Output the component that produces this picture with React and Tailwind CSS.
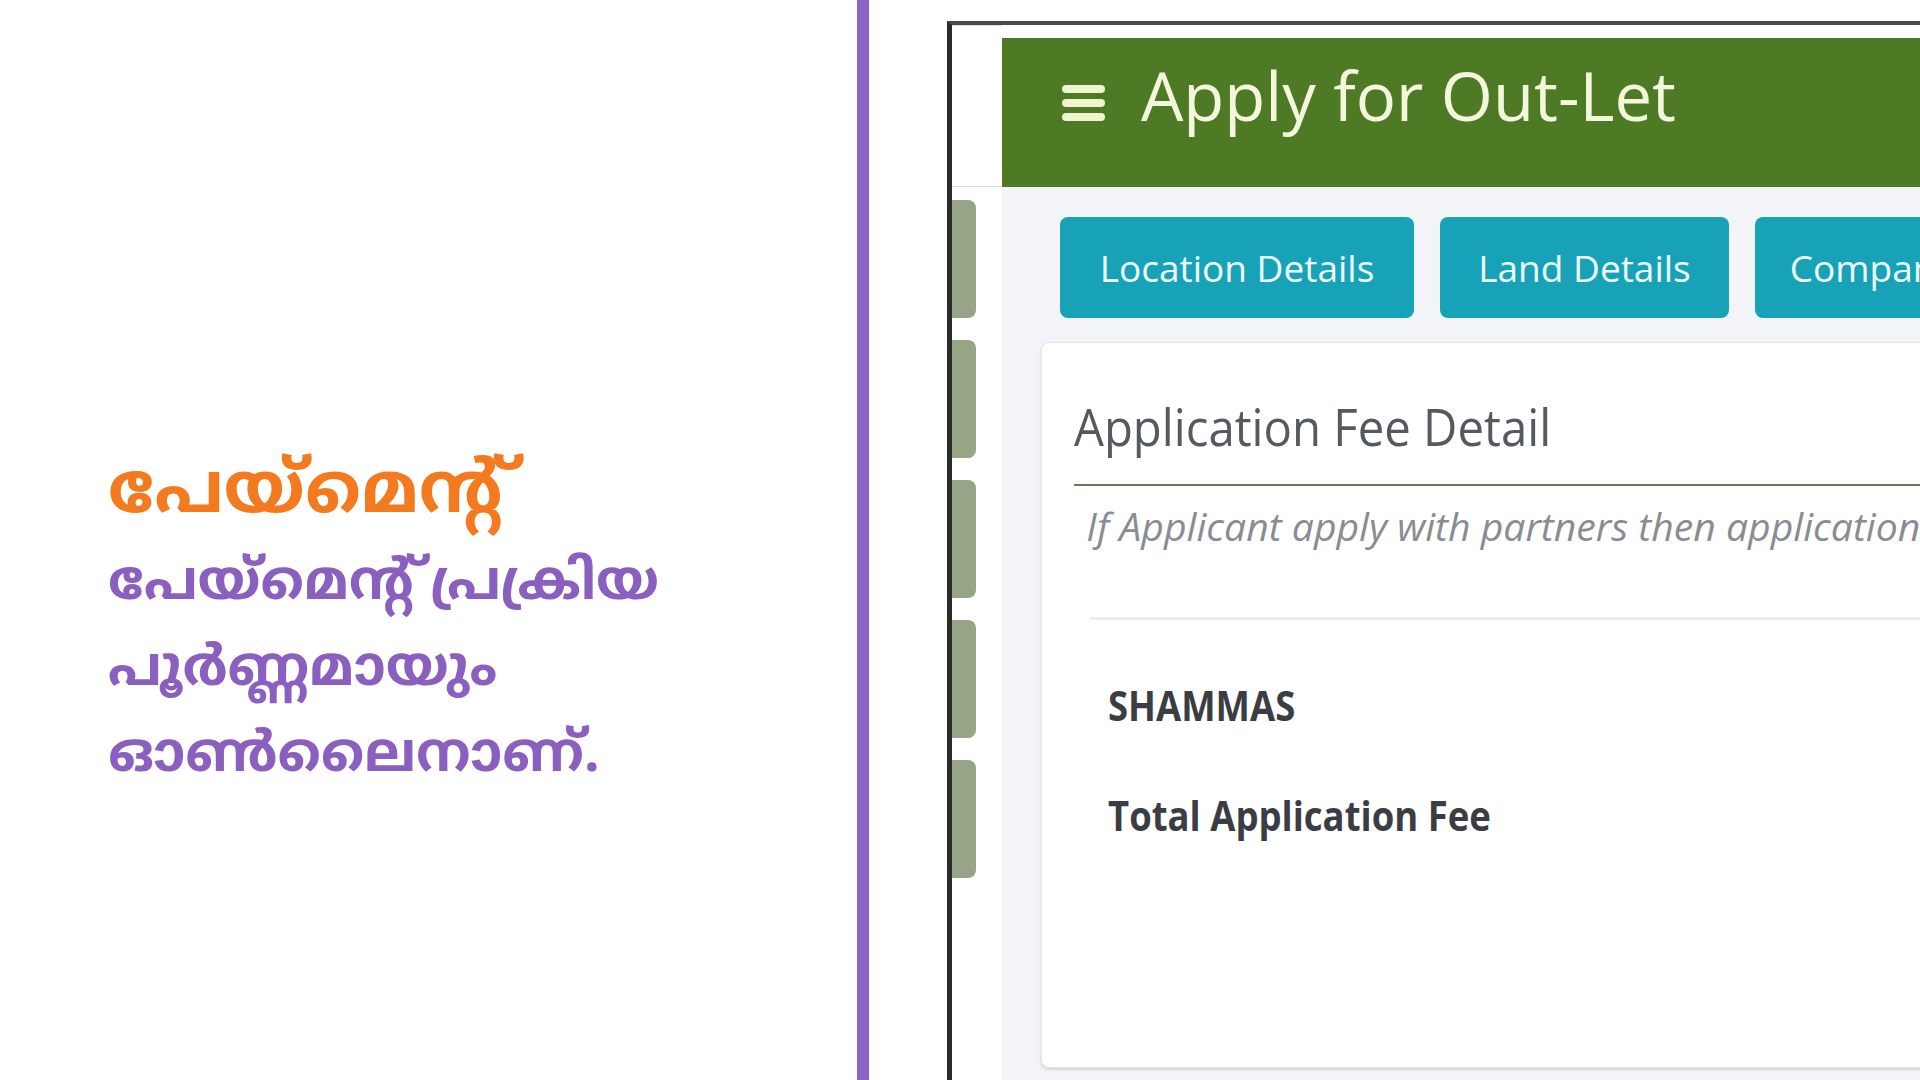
const ml = { fontFamily: '"Noto Sans Malayalam", "Manjari", "Noto Sans", sans-serif' };
const os = { fontFamily: '"Open Sans", "Liberation Sans", sans-serif' };

const SideTab = () => <div className="h-[118px] w-[24px] rounded-r-lg bg-[#97a586]" />;

const TabButton = ({ label, width }) => (
  <div
    className={`flex h-[101px] shrink-0 items-center justify-center rounded-lg bg-[#17a2b8] text-[37px] text-[#eefcff] ${width}`}
  >
    <span className="whitespace-nowrap">{label}</span>
  </div>
);

export default function App() {
  return (
    <div className="flex h-[1080px] w-[1920px] overflow-hidden bg-white">
      {/* caption */}
      <div className="w-[857px] shrink-0 pl-[108px] pt-[440px]" style={ml}>
        <h1 className="text-[71px] font-bold leading-[110px] text-[#f47a20]">പേയ്മെന്റ്</h1>
        <p className="-mt-[7px] text-[55px] font-bold leading-[86px] text-[#8a5fc0]">
          പേയ്മെന്റ് പ്രക്രിയ
          <br />
          പൂർണ്ണമായും
          <br />
          ഓൺലൈനാണ്.
        </p>
      </div>

      <div className="w-[12px] shrink-0 bg-[#8b62c6]" />

      {/* screenshot */}
      <div className="flex-1 pl-[78px] pt-[21px]" style={os}>
        <div className="flex h-full border-l-[5px] border-t-[4px] border-l-[#2b2b2b] border-t-[#4a4a4a]">
          <div className="flex w-[50px] shrink-0 flex-col bg-white">
            <div className="h-[162px] border-b border-t border-[#dcdcdc]" />
            <div className="flex flex-col gap-[22px] pt-[13px]">
              <SideTab />
              <SideTab />
              <SideTab />
              <SideTab />
              <SideTab />
            </div>
          </div>

          <div className="flex flex-1 flex-col pt-[13px]">
            <div className="flex h-[149px] items-start gap-[36px] bg-[#4f7a25] pl-[60px]">
              <div className="mt-[47px] flex flex-col gap-[6px]">
                <div className="h-[8px] w-[43px] rounded-sm bg-[#eef5cf]" />
                <div className="h-[8px] w-[43px] rounded-sm bg-[#eef5cf]" />
                <div className="h-[8px] w-[43px] rounded-sm bg-[#eef5cf]" />
              </div>
              <span className="mt-[24px] whitespace-nowrap text-[67px] leading-none text-[#f3f7dc]">
                Apply for Out-Let
              </span>
            </div>

            <div className="flex flex-1 flex-col bg-[#f3f4f8] pb-[12px]">
              <div className="flex gap-[26px] pl-[58px] pt-[30px]">
                <TabButton label="Location Details" width="w-[354px]" />
                <TabButton label="Land Details" width="w-[289px]" />
                <TabButton label="Company Details" width="w-[361px]" />
              </div>

              <div className="ml-[39px] mt-[24px] flex-1 rounded-l-lg border border-r-0 border-[#e2e4ea] bg-white pl-[32px] pt-[53px] shadow-[0_2px_3px_rgba(0,0,0,0.12)]">
                <h2 className="origin-left scale-x-[0.91] whitespace-nowrap text-[52px] leading-[60px] text-[#555a60]">
                  Application Fee Detail
                </h2>
                <div className="mt-[28px] h-[2px] bg-[#6b7560]" />
                <p className="origin-left scale-x-[1.03] whitespace-nowrap pl-[12px] pt-[17px] text-[38px] italic leading-[46px] text-[#8a8c92]">
                  If Applicant apply with partners then application fee will be calculated
                </p>
                <div className="ml-[16px] mt-[68px] h-[3px] bg-[#eeeff2]" />
                <div className="pl-[34px] pt-[60px] text-[41px] font-bold text-[#3a3d44]">
                  <div className="origin-left scale-x-[0.89] leading-[50px]">SHAMMAS</div>
                  <div className="mt-[60px] origin-left scale-x-[0.89] leading-[50px]">Total Application Fee</div>
                </div>
              </div>
            </div>
          </div>
        </div>
      </div>
    </div>
  );
}
